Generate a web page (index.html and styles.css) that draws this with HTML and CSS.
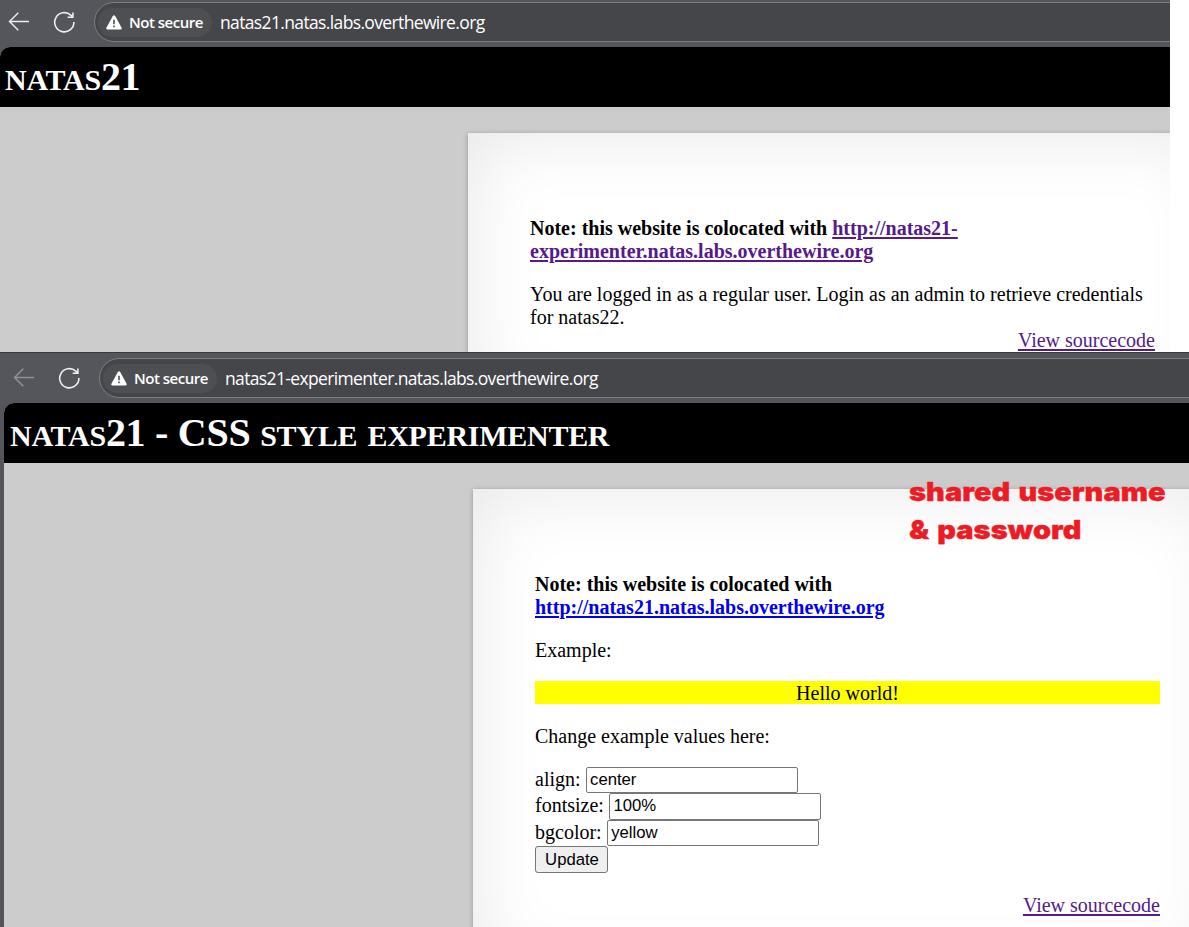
FILE: index.html
```html
<!DOCTYPE html>
<html lang="en">
<head>
<meta charset="utf-8">
<title>natas21</title>
<link rel="stylesheet" href="styles.css">
</head>
<body>
<section class="browser browser-main">
  <header class="toolbar">
    <svg class="back" width="22" height="22" viewBox="0 0 22 22"><path d="M21 10.5H1.5M10.3 1.7 1.5 10.5l8.8 8.8"/></svg>
    <svg class="reload" width="24" height="24" viewBox="0 0 24 24"><path d="M21.9 12A9.6 9.6 0 1 1 18.8 5.2L20.6 7M20.9 2.4V7.2H15.6"/></svg>
    <div class="address">
      <div class="security">
        <svg width="16" height="15" viewBox="0 0 16 15"><path class="tri" d="M6.7 1.2Q8-.8 9.3 1.2L15.6 12.7Q16.2 14.5 14.5 14.5H1.5Q-.2 14.5.4 12.7Z"/><path class="bang" d="M7.2 4.7h1.6v4.5H7.2zM7.2 10.6h1.6v1.6H7.2z"/></svg>
        <span class="not-secure">Not secure</span>
      </div>
      <span class="url">natas21.natas.labs.overthewire.org</span>
    </div>
  </header>
  <main class="page">
    <h1><span class="small">natas</span>21</h1>
    <div class="content">
      <p class="note">Note: this website is colocated with <a class="visited" href="#">http://natas21-</a><br><a class="visited" href="#">experimenter.natas.labs.overthewire.org</a></p>
      <p class="status">You are logged in as a regular user. Login as an admin to retrieve credentials<br>for natas22.</p>
      <div class="source"><a class="visited" href="#">View sourcecode</a></div>
    </div>
  </main>
</section>
<section class="browser browser-exp">
  <header class="toolbar">
    <svg class="back disabled" width="22" height="22" viewBox="0 0 22 22"><path d="M21 10.5H1.5M10.3 1.7 1.5 10.5l8.8 8.8"/></svg>
    <svg class="reload" width="24" height="24" viewBox="0 0 24 24"><path d="M21.9 12A9.6 9.6 0 1 1 18.8 5.2L20.6 7M20.9 2.4V7.2H15.6"/></svg>
    <div class="address">
      <div class="security">
        <svg width="16" height="15" viewBox="0 0 16 15"><path class="tri" d="M6.7 1.2Q8-.8 9.3 1.2L15.6 12.7Q16.2 14.5 14.5 14.5H1.5Q-.2 14.5.4 12.7Z"/><path class="bang" d="M7.2 4.7h1.6v4.5H7.2zM7.2 10.6h1.6v1.6H7.2z"/></svg>
        <span class="not-secure">Not secure</span>
      </div>
      <span class="url">natas21-experimenter.natas.labs.overthewire.org</span>
    </div>
  </header>
  <main class="page">
    <h1><span class="small">natas</span>21 - CSS <span class="small">style experimenter</span></h1>
    <div class="content">
      <p class="note">Note: this website is colocated with<br><a class="link" href="#">http://natas21.natas.labs.overthewire.org</a></p>
      <p>Example:</p>
      <div class="example"><span>Hello world!</span></div>
      <p>Change example values here:</p>
      <form>
        <div class="row"><label for="align">align:</label><input id="align" value="center"></div>
        <div class="row"><label for="fontsize">fontsize:</label><input id="fontsize" value="100%"></div>
        <div class="row"><label for="bgcolor">bgcolor:</label><input id="bgcolor" value="yellow"></div>
        <button type="button">Update</button>
      </form>
      <div class="source"><a class="visited" href="#">View sourcecode</a></div>
    </div>
  </main>
  <div class="annotation">shared username<br>&amp; password</div>
</section>
</body>
</html>
```
FILE: styles.css
```css
* { box-sizing: border-box; }
body { margin: 0; height: 927px; overflow: hidden; background: #fff; font: 20px/23px "Liberation Serif", serif; color: #000; }
.browser { position: relative; overflow: hidden; background: #55565b; }
.browser-main { width: 1170px; height: 352px; }
.browser-exp { width: 1189px; height: 575px; padding-left: 4px; border-top: 1px solid #38393c; }
.toolbar { display: flex; align-items: flex-start; height: 47px; padding: 2px 0 0 8px; }
.browser-exp .toolbar { height: 50px; padding: 5px 0 0 9px; }
.toolbar svg { flex: none; }
.back, .reload { fill: none; stroke: #eeeeef; stroke-width: 1.4; }
.back { margin-top: 9px; }
.disabled { stroke: #929397; }
.reload { margin: 8px 0 0 22px; stroke-width: 1.6; }
.address { display: flex; align-items: center; flex: 1; height: 40px; margin: 0 -30px 0 18px; padding-left: 3px; border: 1px solid #7d7e82; border-radius: 20px; background: #45464a; }
.security { display: flex; align-items: center; width: 114px; height: 29px; padding-left: 8px; border-radius: 15px; background: #4e4f53; }
.tri { fill: #fff; }
.bang { fill: #4e4f53; }
.not-secure { margin-left: 7px; font: 600 15px/20px "Open Sans", sans-serif; color: #fff; white-space: nowrap; letter-spacing: -.5px; }
.url { margin-left: 8px; padding-bottom: 1px; font: 17.5px/24px "Open Sans", sans-serif; color: #fff; white-space: nowrap; letter-spacing: -.64px; }
.page { height: 305px; background: #ccc; border-radius: 10px 0 0 0; overflow: hidden; }
.browser-exp .page { height: 524px; }
h1 { height: 60px; margin: 0; padding: 7px 0 0 5px; background: #000; color: #fff; font: bold 40px/46px "Liberation Serif", serif; letter-spacing: -.27px; white-space: nowrap; }
.browser-exp h1 { padding-left: 6px; }
.small { font-size: 42.2px; line-height: 1px; font-variant: small-caps; }
.content { width: 750px; margin: 26px 0 0 468px; padding: 83.5px 63px 62px 62px; background: #fff; box-shadow: 0 1px 5px rgba(0,0,0,.27), 0 0 75px rgba(0,0,0,.1) inset; }
.browser-exp .content { margin-left: 469px; }
p { margin: 0 0 20px; white-space: nowrap; }
.status { margin-bottom: 0; }
.note { font-weight: bold; }
a { text-decoration-thickness: 2px; text-underline-offset: 1.5px; }
.visited { color: #551a8b; }
.link { color: #00e; }
.source { text-align: right; }
.example { height: 23px; margin: -1px 0 21px; background: #ff0; line-height: 25px; text-align: center; }
form { margin: -1px 0 21px; }
.row { display: flex; align-items: flex-start; height: 26.5px; }
.row label { margin-right: 5px; line-height: 25px; }
input { width: 212px; height: 26.5px; padding: 1px 3.5px; border: 1px solid #767676; border-radius: 2px; background: #fff; font: 16.7px/20px "Liberation Sans", sans-serif; }
button { display: block; width: 73px; height: 27px; padding: 0 0 0 1px; border: 1px solid #767676; border-radius: 3px; background: #efefef; font: 16.7px/20px "Liberation Sans", sans-serif; color: #000; }
.annotation { position: absolute; left: 909px; top: 120px; color: #ed1c24; font: 900 26px/38px Inter, sans-serif; white-space: nowrap; letter-spacing: .1px; word-spacing: 2px; -webkit-text-stroke: .4px #ed1c24; transform: scaleX(1.11); transform-origin: left; }
```
